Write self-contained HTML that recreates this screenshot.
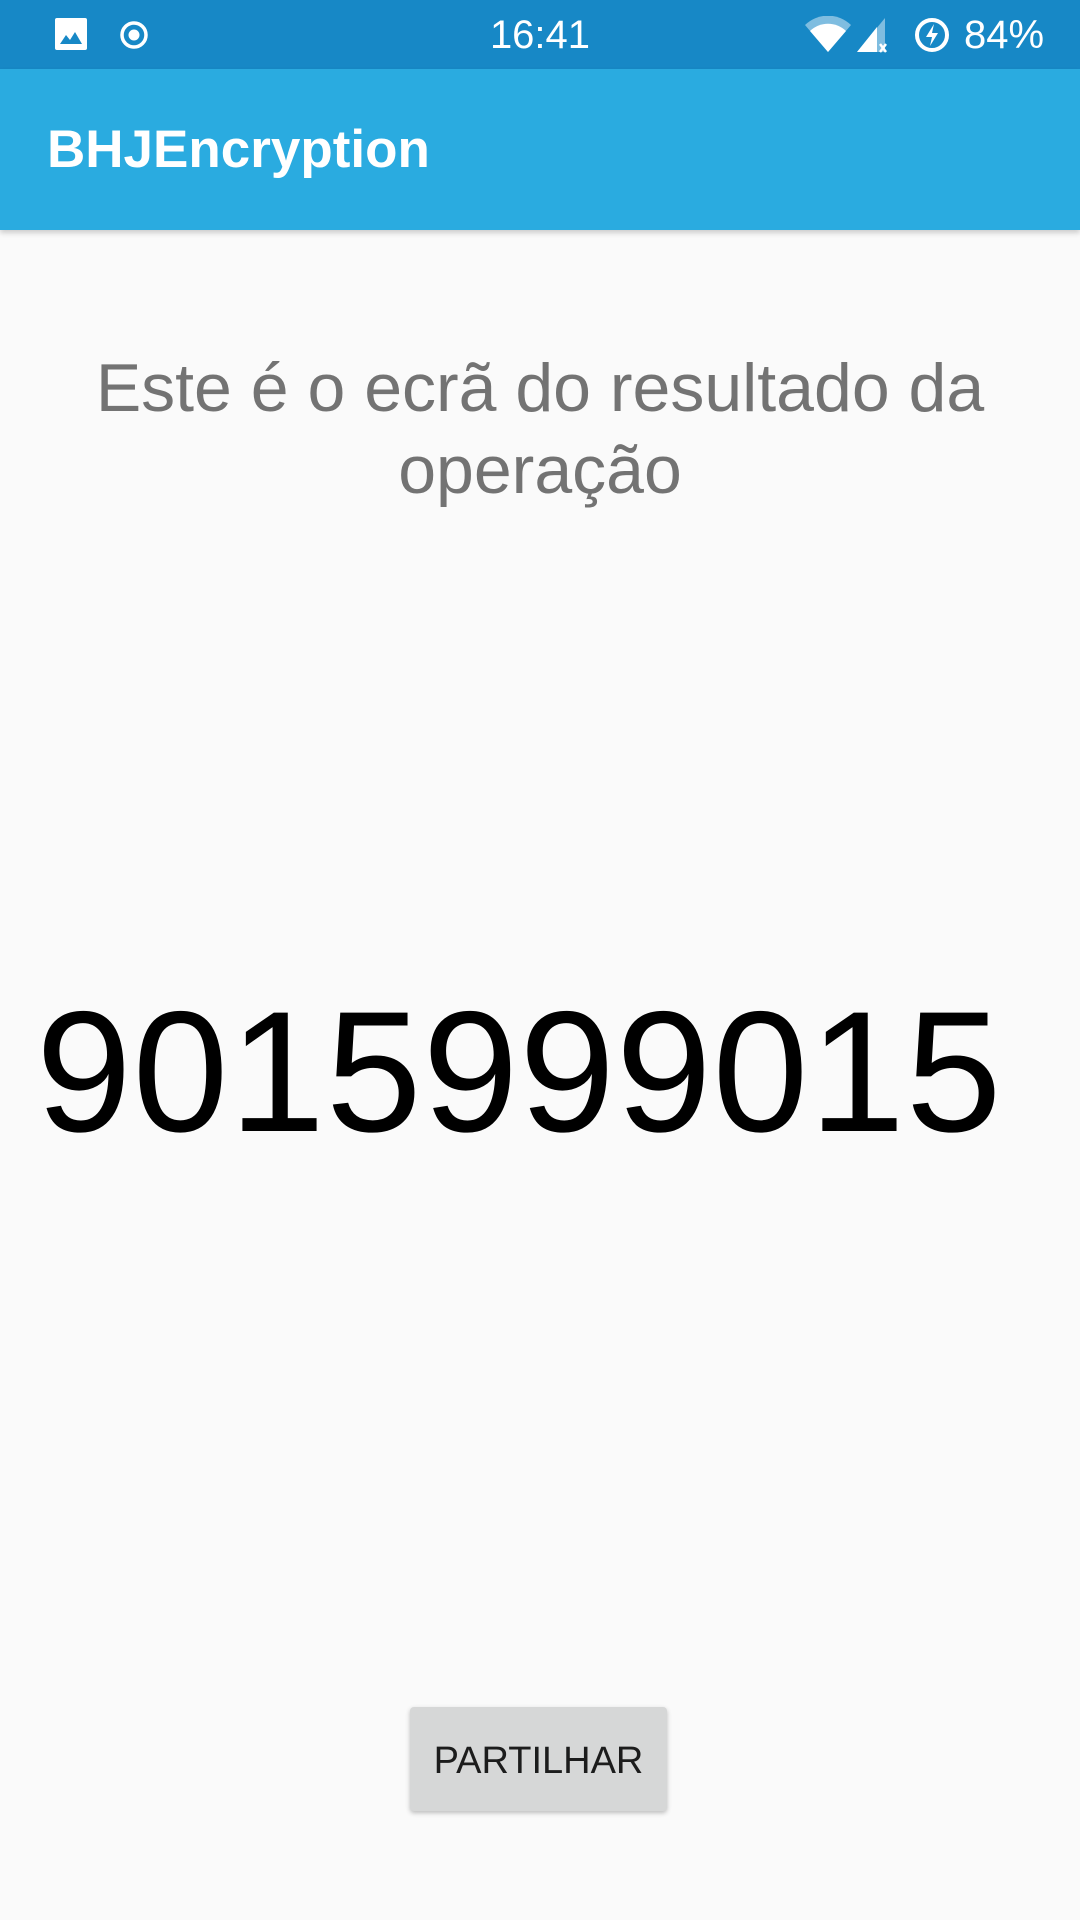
<!DOCTYPE html>
<html><head><meta charset="utf-8"><style>
html,body{margin:0;padding:0;width:1080px;height:1920px;background:#fafafa;font-family:"Liberation Sans",sans-serif;overflow:hidden;position:relative}
.sb{position:absolute;left:0;top:0;width:1080px;height:69px;background:#1788c6;color:#fff}
.ab{position:absolute;left:0;top:69px;width:1080px;height:161px;background:#2aabe0;box-shadow:0 3px 5px rgba(0,0,0,.18)}
.title{position:absolute;left:47px;top:51px;font-size:53px;font-weight:bold;color:#fff;line-height:60px}
.time{position:absolute;left:0;width:1080px;text-align:center;top:13px;font-size:40px;line-height:44px}
.pct{position:absolute;left:964px;top:13px;font-size:40px;line-height:44px}
.msg{position:absolute;left:0;width:1080px;top:347px;text-align:center;font-size:68px;line-height:82px;color:#737373;white-space:nowrap}
.num{position:absolute;left:36px;top:972px;font-size:172px;line-height:200px;color:#000;letter-spacing:1px}
.btn{position:absolute;left:410px;top:1707px;width:257px;height:104px;background:#d6d7d7;border-radius:4px;box-shadow:0 2px 5px rgba(0,0,0,.25);text-align:center;line-height:108px;font-size:38px;color:#1c1c1c}
</style></head><body>
<div class="sb">
<svg style="position:absolute;left:55px;top:18px" width="32" height="32" viewBox="0 0 32 32"><rect x="0" y="0" width="32" height="32" rx="2" fill="#fff"/><path d="M5 26 L11 17 L15 22 L20 14 L27 26 Z" fill="#1788c6"/></svg>
<svg style="position:absolute;left:119px;top:20px" width="30" height="30" viewBox="0 0 30 30"><circle cx="15" cy="15" r="12" fill="none" stroke="#fff" stroke-width="3.5"/><circle cx="15" cy="15" r="5.5" fill="#fff"/></svg>
<div class="time">16:41</div>
<svg style="position:absolute;left:805px;top:16px" width="46" height="36" viewBox="0 0 46 36"><path d="M0 9 A33 33 0 0 1 46 9 L23 36 Z" fill="#fff" opacity=".45"/><path d="M5 15 A26 26 0 0 1 41 15 L23 36 Z" fill="#fff"/></svg>
<svg style="position:absolute;left:857px;top:18px" width="36" height="36" viewBox="0 0 36 36"><path d="M28 0 L28 34 L0 34 Z" fill="#fff" opacity=".45"/><path d="M20 9 L20 34 L0 34 Z" fill="#fff"/><path d="M23 26 L29 34 M29 26 L23 34" stroke="#fff" stroke-width="2.5"/></svg>
<svg style="position:absolute;left:913px;top:15px" width="38" height="40" viewBox="0 0 38 40"><circle cx="19" cy="20" r="15" fill="none" stroke="#fff" stroke-width="4"/><path d="M21 9 L13 22 L19 22 L17 31 L25 18 L19 18 Z" fill="#fff"/></svg>
<div class="pct">84%</div>
</div>
<div class="ab"><div class="title">BHJEncryption</div></div>
<div class="msg">Este é o ecrã do resultado da<br>operação</div>
<div class="num">9015999015</div>
<div class="btn">PARTILHAR</div>
</body></html>
